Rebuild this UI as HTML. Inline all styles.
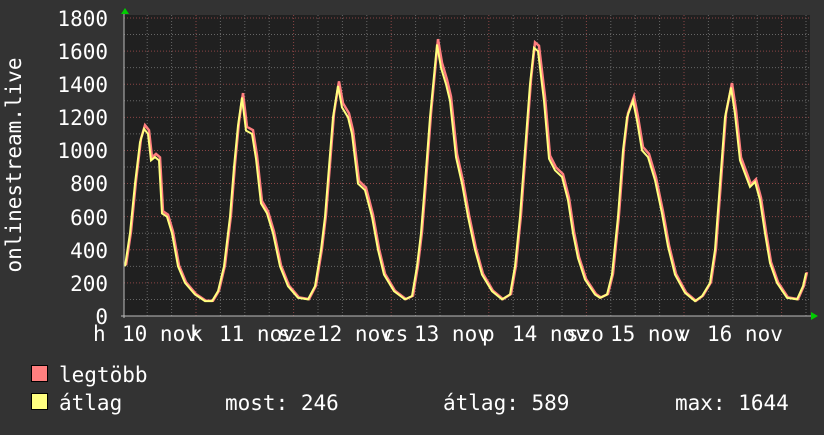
<!DOCTYPE html><html><head><meta charset="utf-8"><style>
body{margin:0;background:#333333;width:824px;height:430px;overflow:hidden}
svg text{font-family:"DejaVu Sans Mono","Liberation Mono",monospace;fill:#fff;font-size:21px}
</style></head><body>
<svg id="s" width="824" height="430" xmlns="http://www.w3.org/2000/svg">
<rect x="0" y="0" width="824" height="430" fill="#333"/>
<rect x="124" y="15" width="686" height="301" fill="#202020"/>
<g id="grid"></g>
<polyline id="mx" fill="none" stroke="#ff7f7f" stroke-width="2.5"/>
<polyline id="av" fill="none" stroke="#ffff7f" stroke-width="2"/>
<line x1="124" y1="12" x2="124" y2="318" stroke="#bbb" stroke-width="1"/>
<line x1="121" y1="316" x2="812" y2="316" stroke="#bbb" stroke-width="1"/>
<polygon points="121,14 125,8 129,14" fill="#00cc00"/>
<polygon points="811,312 818,316 811,320" fill="#00cc00"/>
<g text-anchor="end">
<text x="108" y="26">1800</text><text x="108" y="59">1600</text><text x="108" y="92">1400</text>
<text x="108" y="125">1200</text><text x="108" y="158">1000</text><text x="108" y="191">800</text>
<text x="108" y="225">600</text><text x="108" y="258">400</text><text x="108" y="291">200</text>
<text x="108" y="324">0</text></g>
<text transform="translate(21,165) rotate(-90)" text-anchor="middle">onlinestream.live</text>
<g>
<text x="93" y="341">h</text><text x="122" y="341">10 nov</text>
<text x="190" y="341">k</text><text x="219" y="341">11 nov</text>
<text x="278" y="341">sze</text><text x="317" y="341">12 nov</text>
<text x="383" y="341">cs</text><text x="414" y="341">13 nov</text>
<text x="482" y="341">p</text><text x="512" y="341">14 nov</text>
<text x="566" y="341">szo</text><text x="610" y="341">15 nov</text>
<text x="678" y="341">v</text><text x="707" y="341">16 nov</text>
</g>
<rect x="31.5" y="365.5" width="16" height="16" fill="#ff7f7f" stroke="#000"/>
<rect x="31.5" y="393.5" width="16" height="16" fill="#ffff7f" stroke="#000"/>
<text x="59" y="382">legtöbb</text>
<text x="59" y="410">átlag</text>
<text x="225" y="410">most: 246</text>
<text x="443" y="410">átlag: 589</text>
<text x="675" y="410">max: 1644</text>
</svg>
<script>
var g=document.getElementById('grid'),h='';
for(var i=0;i<18;i++){var y=316-i*16.556;var maj=i%2==0;if(i==0)continue;
h+='<line x1="124" x2="810" y1="'+y+'" y2="'+y+'" stroke="'+(maj?'#8a4444':'#666')+'" stroke-dasharray="1,2"/>';}
h+='<line x1="124" x2="810" y1="18" y2="18" stroke="#8a4444" stroke-dasharray="1,2"/>';
for(var x=196-97.6*3/4;x<810;x+=24.4){if(x<125)continue;var d=Math.abs(((x-196)/97.6)-Math.round((x-196)/97.6))<0.05;
h+='<line y1="15" y2="316" x1="'+x+'" x2="'+x+'" stroke="'+(d?'#8a4444':'#666')+'" stroke-dasharray="1,2"/>';}
g.innerHTML=h;
var p=[[125,300],[130,500],[135,800],[140,1050],[144,1130],[148,1100],[151,940],[155,960],[159,940],[162,620],[167,600],[172,500],[178,300],[185,200],[195,130],[205,90],[212,90],[218,150],[224,300],[230,600],[234,900],[238,1150],[242,1320],[246,1120],[252,1100],[256,950],[261,680],[267,620],[273,500],[280,300],[288,180],[298,110],[308,100],[315,180],[321,400],[325,600],[329,900],[333,1200],[338,1390],[342,1260],[348,1200],[352,1100],[358,800],[365,760],[372,600],[378,400],[384,250],[394,150],[405,100],[412,120],[417,300],[421,500],[425,800],[430,1200],[434,1450],[437,1640],[441,1500],[446,1400],[450,1300],[456,960],[462,800],[468,600],[475,400],[482,250],[492,150],[502,100],[510,130],[515,300],[520,600],[525,1000],[530,1400],[534,1620],[538,1600],[544,1300],[549,950],[555,880],[562,840],[568,700],[573,500],[578,350],[585,220],[595,130],[600,110],[607,130],[612,250],[618,600],[623,1000],[627,1200],[633,1300],[637,1180],[642,1000],[648,960],[655,820],[662,620],[668,420],[675,250],[685,140],[695,90],[702,120],[710,200],[715,400],[720,800],[725,1200],[731,1380],[735,1220],[740,940],[745,860],[750,780],[755,810],[760,700],[765,500],[770,320],[777,200],[787,110],[797,100],[803,180],[806,260]];
function Y(v){return 316-v*0.16556;}
var a='',m='';
p.forEach(function(q){a+=q[0]+','+Y(q[1]).toFixed(1)+' ';m+=(q[0]+1)+','+Y(q[1]*1.02).toFixed(1)+' ';});
document.getElementById('av').setAttribute('points',a);
document.getElementById('mx').setAttribute('points',m);
</script>
</body></html>
